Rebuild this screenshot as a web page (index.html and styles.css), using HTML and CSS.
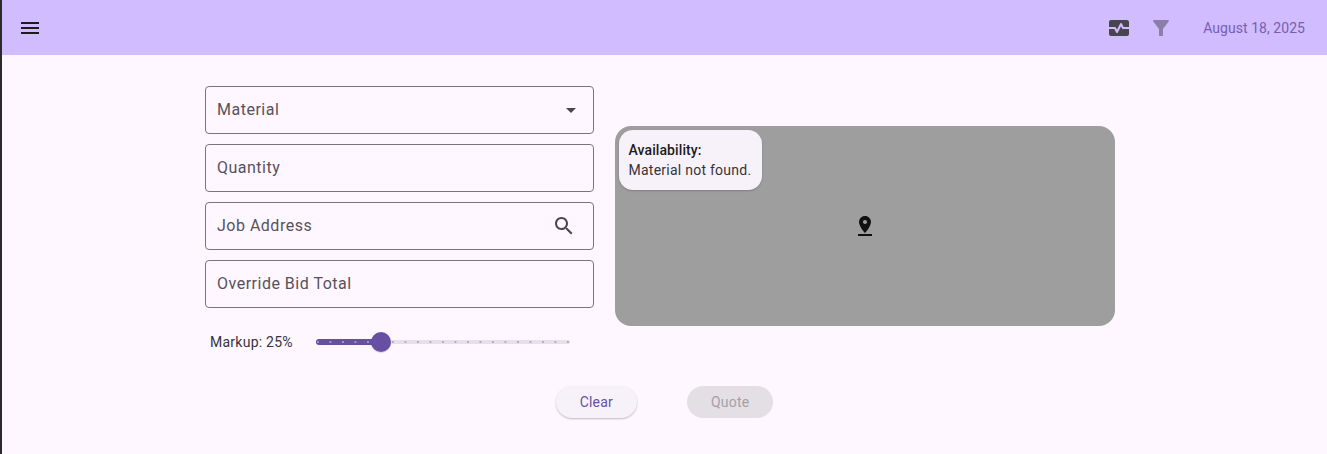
FILE: index.html
```html
<!DOCTYPE html>
<html lang="en">
<head>
<meta charset="UTF-8" />
<title>Quote</title>
<link rel="stylesheet" href="styles.css">
</head>
<body>
<div class="app">
    <header class="app-bar">
        <svg class="icon icon-menu" viewBox="0 0 24 24"><path d="M3 18h18v-2H3v2zm0-5h18v-2H3v2zm0-7v2h18V6H3z"/></svg>
        <div class="app-bar-actions">
            <svg class="icon icon-status" viewBox="0 0 24 24"><path d="M15.11 12.45 14 10.24l-3.11 6.21c-.16.34-.51.55-.89.55s-.73-.21-.89-.55L7.38 13H2v5c0 1.1.9 2 2 2h16c1.1 0 2-.9 2-2v-5h-6c-.38 0-.73-.21-.89-.55z"/><path d="M20 4H4c-1.1 0-2 .9-2 2v5h6c.38 0 .73.21.89.55L10 13.76l3.11-6.21c.34-.68 1.45-.68 1.79 0L16.62 11H22V6c0-1.1-.9-2-2-2z"/></svg>
            <svg class="icon icon-filter" viewBox="0 0 24 24"><path d="M4.25 5.61C6.27 8.2 10 13 10 13v6c0 .55.45 1 1 1h2c.55 0 1-.45 1-1v-6s3.72-4.8 5.74-7.39c.51-.66.04-1.61-.79-1.61H5.04c-.83 0-1.3.95-.79 1.61z"/></svg>
            <span class="app-bar-date">August 18, 2025</span>
        </div>
    </header>

    <main class="content">
        <div class="quote-row">
            <form class="quote-form">
                <div class="field">
                    <span>Material</span>
                    <svg class="icon icon-arrow" viewBox="0 0 24 24"><path d="M7 10l5 5 5-5z"/></svg>
                </div>
                <div class="field"><span>Quantity</span></div>
                <div class="field">
                    <span>Job Address</span>
                    <svg class="icon icon-search" viewBox="0 0 24 24"><path d="M15.5 14h-.79l-.28-.27C15.41 12.59 16 11.11 16 9.5 16 5.91 13.09 3 9.5 3S3 5.91 3 9.5 5.91 16 9.5 16c1.61 0 3.09-.59 4.23-1.57l.27.28v.79l5 4.99L20.49 19l-4.99-5zm-6 0C7.01 14 5 11.99 5 9.5S7.01 5 9.5 5 14 7.01 14 9.5 11.99 14 9.5 14z"/></svg>
                </div>
                <div class="field"><span>Override Bid Total</span></div>
                <div class="markup">
                    <span class="markup-label">Markup: 25%</span>
                    <div class="slider">
                        <div class="slider-active"></div>
                        <div class="slider-thumb"></div>
                    </div>
                </div>
            </form>

            <div class="map">
                <div class="map-card">
                    <div class="map-card-title">Availability:</div>
                    <div>Material not found.</div>
                </div>
                <svg class="icon icon-pin" viewBox="0 0 24 24"><path d="M18 8c0-3.31-2.69-6-6-6S6 4.69 6 8c0 4.5 6 11 6 11s6-6.5 6-11zm-8 0c0-1.1.9-2 2-2s2 .9 2 2-.89 2-2 2c-1.1 0-2-.9-2-2zM5 20v2h14v-2H5z"/></svg>
            </div>
        </div>

        <div class="actions">
            <button class="btn btn-clear" type="button">Clear</button>
            <button class="btn btn-quote" type="button" disabled>Quote</button>
        </div>
    </main>
</div>
</body>
</html>
```

FILE: styles.css
```css
body {
    margin: 0;
    padding: 0;
    overflow: hidden;
    background-color: #fef7ff;
    color: #56525c;
    font-family: 'Roboto', 'Liberation Sans', sans-serif;
}

.app {
    height: 454px;
    border-left: 2px solid #2b2930;
    box-sizing: border-box;
    display: flex;
    flex-direction: column;
}

.icon {
    width: 24px;
    height: 24px;
    flex: none;
    fill: #49454f;
}

.app-bar {
    height: 55px;
    flex: none;
    background-color: #d0bcff;
    display: flex;
    align-items: center;
    justify-content: space-between;
    padding: 0 22px 0 16px;
}

.app-bar-actions {
    display: flex;
    align-items: center;
}

.icon-menu {
    fill: #1d1b20;
}

.icon-filter {
    margin-left: 18px;
    fill: #8b7ea8;
}

.app-bar-date {
    margin-left: 30px;
    font-size: 14px;
    letter-spacing: 0.05px;
    color: #7560b0;
}

.content {
    display: flex;
    flex-direction: column;
    padding-top: 31px;
}

.quote-row {
    display: flex;
    align-items: center;
    gap: 21px;
    padding-left: 203px;
}

.quote-form {
    width: 389px;
    display: flex;
    flex-direction: column;
    gap: 10px;
}

.field {
    height: 48px;
    box-sizing: border-box;
    border: 1px solid #79747e;
    border-radius: 4px;
    padding: 0 17px 2px 11px;
    display: flex;
    align-items: center;
    justify-content: space-between;
    font-size: 16px;
    letter-spacing: 0.5px;
}

.field .icon {
    margin-bottom: -2px;
}

.icon-arrow {
    margin-right: -7px;
}

.markup {
    height: 48px;
    display: flex;
    align-items: center;
    padding-left: 5px;
}

.markup-label {
    width: 106px;
    font-size: 14px;
    letter-spacing: 0.25px;
    color: #36333b;
}

.slider {
    position: relative;
    width: 254px;
    height: 4px;
    border-radius: 2px;
    background-color: #e7e0ec;
    background-image: radial-gradient(circle at 2.2px 2px, #b3acba 1px, transparent 1.2px);
    background-size: 12.5px 4px;
}

.slider-active {
    width: 64px;
    height: 6px;
    margin-top: -1px;
    border-radius: 3px;
    background-color: #6750a4;
    background-image: radial-gradient(circle at 2.2px 3px, #a493cf 1px, transparent 1.2px);
    background-size: 12.5px 6px;
}

.slider-thumb {
    position: absolute;
    top: -8px;
    left: 54.5px;
    width: 20px;
    height: 20px;
    border-radius: 50%;
    background-color: #6750a4;
    box-shadow: 0 1px 1px rgba(0, 0, 0, 0.15);
}

.map {
    position: relative;
    width: 500px;
    height: 200px;
    border-radius: 16px;
    background-color: #9e9e9e;
    display: flex;
    align-items: center;
    justify-content: center;
}

.icon-pin {
    fill: #111;
    margin-left: -1px;
}

.map-card {
    position: absolute;
    top: 4px;
    left: 3.5px;
    box-sizing: border-box;
    width: 143px;
    height: 60px;
    padding: 10px;
    border-radius: 14px;
    background-color: #f7f2fa;
    box-shadow: 0 1px 2px rgba(0, 0, 0, 0.2);
    font-size: 14px;
    line-height: 20px;
    letter-spacing: 0.25px;
    color: #36333b;
    white-space: nowrap;
}

.map-card-title {
    font-weight: 500;
    letter-spacing: 0.1px;
    color: #1d1b20;
}

.actions {
    display: flex;
    justify-content: center;
    gap: 50px;
    margin-top: 20px;
}

.btn {
    height: 32px;
    border: 0;
    border-radius: 16px;
    padding: 0 24px;
    font-family: inherit;
    font-size: 14px;
    font-weight: 400;
    letter-spacing: 0.2px;
}

.btn-clear {
    background-color: #f7f2fa;
    color: #6750a4;
    box-shadow: 0 1px 2px rgba(0, 0, 0, 0.25);
}

.btn-quote {
    background-color: #e3dfe4;
    color: #a5a0a9;
}
```
